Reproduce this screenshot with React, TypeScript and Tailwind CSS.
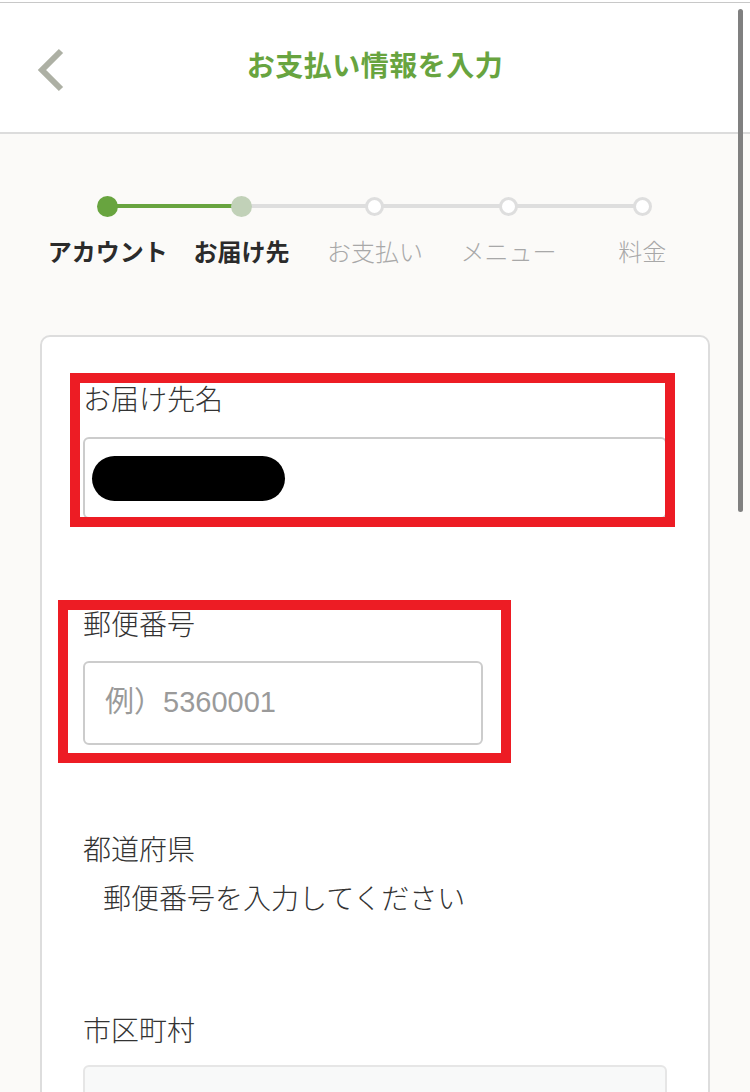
import React from 'react'

const jp = { fontFamily: '"Liberation Sans", "Noto Sans CJK JP", sans-serif' }

const steps = [
  { label: 'アカウント', state: 'done' },
  { label: 'お届け先', state: 'current' },
  { label: 'お支払い', state: 'todo' },
  { label: 'メニュー', state: 'todo' },
  { label: '料金', state: 'todo' },
]

function Stepper() {
  return (
    <div className="mx-[41px] mt-[61px] grid grid-cols-5">
      {steps.map((s, i) => (
        <div key={s.label} className="flex flex-col items-center">
          <div className="relative flex h-[22px] w-full items-center justify-center">
            {i > 0 && (
              <div
                className={`absolute left-0 right-1/2 top-[9px] h-[4px] ${i === 1 ? 'bg-[#68a43f]' : 'bg-[#dedede]'}`}
              />
            )}
            {i < steps.length - 1 && (
              <div
                className={`absolute left-1/2 right-0 top-[9px] h-[4px] ${i === 0 ? 'bg-[#68a43f]' : 'bg-[#dedede]'}`}
              />
            )}
            {s.state === 'done' && <div className="relative h-[21px] w-[21px] rounded-full bg-[#68a43f]" />}
            {s.state === 'current' && <div className="relative h-[21px] w-[21px] rounded-full bg-[#c1d1b8]" />}
            {s.state === 'todo' && (
              <div className="relative h-[19px] w-[19px] rounded-full border-[3px] border-[#dedede] bg-white" />
            )}
          </div>
          <div
            className={`mt-[20px] whitespace-nowrap text-[24px] leading-[32px] ${
              s.state === 'todo' ? 'font-light text-[#a8a8a8]' : 'font-bold text-[#2b2b2b]'
            }`}
          >
            {s.label}
          </div>
        </div>
      ))}
    </div>
  )
}

function Label({ children }: { children: React.ReactNode }) {
  return <div className="text-[28px] font-light leading-[42px] text-[#333]">{children}</div>
}

export default function App() {
  return (
    <div className="relative h-[1092px] overflow-hidden bg-[#fbfaf8]" style={jp}>
      {/* header */}
      <div className="border-b-2 border-[#dcdcdc] bg-white pt-[2px]">
        <div className="h-[1px] bg-[#c8c8c8]" />
        <div className="relative flex h-[129px] items-center justify-center">
          <svg className="absolute left-[35px] top-[44px]" width="30" height="46" viewBox="0 0 30 46">
            <polyline points="26,4 7,23 26,42" fill="none" stroke="#adb0a4" strokeWidth="6" />
          </svg>
          <h1 className="-mt-[2px] text-[28px] font-bold tracking-[0.5px] text-[#68a43f]">お支払い情報を入力</h1>
        </div>
      </div>

      <Stepper />

      {/* form card */}
      <div className="relative mx-[40px] mt-[66px] h-[900px] rounded-[10px] border-2 border-[#dddddd] bg-white px-[41px] pt-[43px]">
        <Label>お届け先名</Label>
        <div className="mt-[15px] flex h-[82px] items-center rounded-[6px] border-2 border-[#cccccc] bg-white px-[7px]">
          <div className="h-[45px] w-[193px] rounded-full bg-black" />
        </div>

        <div className="mt-[86px]">
          <Label>郵便番号</Label>
          <div className="mt-[14px] flex h-[84px] w-[400px] items-center rounded-[6px] border-2 border-[#cccccc] bg-white px-[20px] text-[29px] text-[#9a9a9a]">
            例）5360001
          </div>
        </div>

        <div className="mt-[85px]">
          <Label>都道府県</Label>
          <div className="mt-[7px] pl-[20px] text-[28px] font-light leading-[42px] text-[#333]">
            郵便番号を入力してください
          </div>
        </div>

        <div className="mt-[90px]">
          <Label>市区町村</Label>
          <div className="mt-[12px] h-[81px] rounded-[6px] border-2 border-[#e6e6e6] bg-[#f8f9f9]" />
        </div>

        {/* annotation boxes */}
        <div className="absolute left-[28px] top-[36px] h-[154px] w-[605px] border-[10px] border-[#ed1c24]" />
        <div className="absolute left-[16px] top-[263px] h-[163px] w-[453px] border-[10px] border-[#ed1c24]" />
      </div>

      {/* scrollbar */}
      <div className="absolute right-[7px] top-[9px] h-[503px] w-[5px] rounded-full bg-[#808080]" />
    </div>
  )
}
